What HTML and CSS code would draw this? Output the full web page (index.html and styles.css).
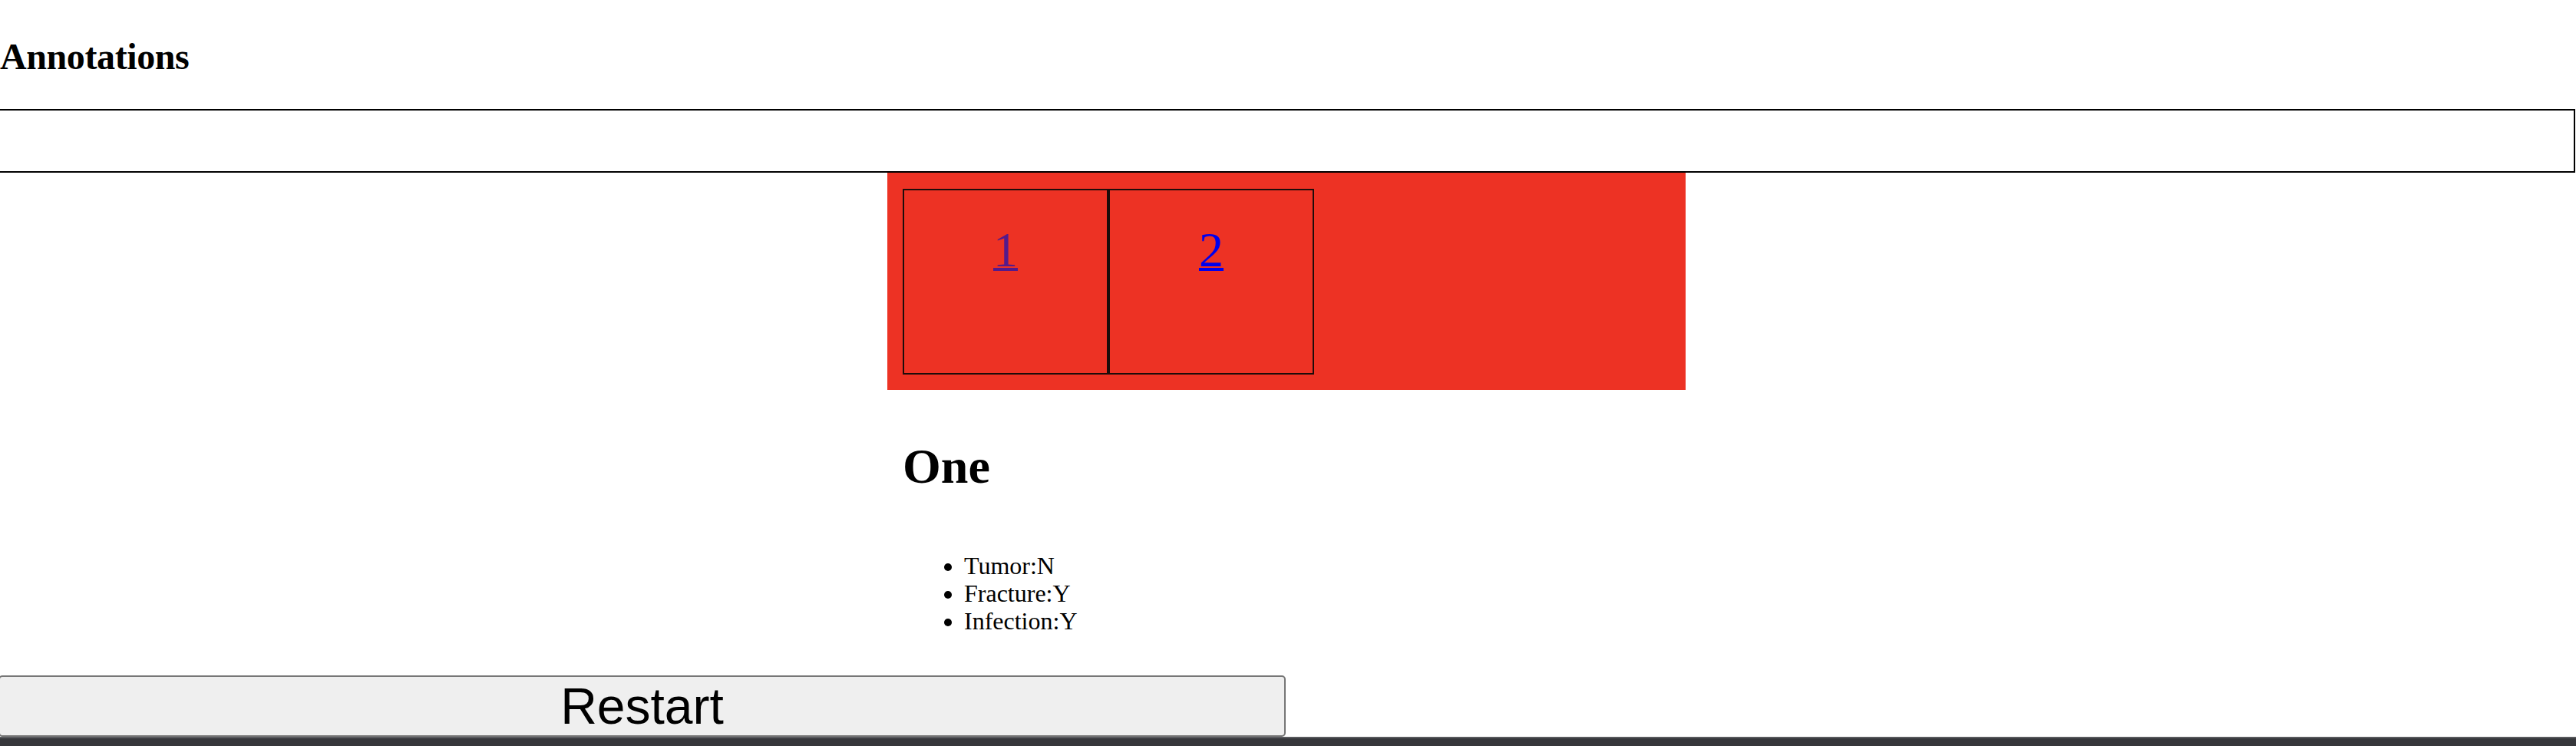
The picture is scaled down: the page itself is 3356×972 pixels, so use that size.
FILE: index.html
```html
<!DOCTYPE html>
<html lang="en">
<head>
<meta charset="utf-8">
<title>Annotations</title>
<link rel="stylesheet" href="styles.css">
</head>
<body>
  <h2 class="title">Annotations</h2>
  <input class="search" type="text">
  <div class="panel">
    <div class="tiles">
      <div class="tile"><a class="tile-link visited" href="#one">1</a></div>
      <div class="tile"><a class="tile-link" href="#two">2</a></div>
    </div>
  </div>
  <div class="detail">
    <h1 class="detail-title">One</h1>
    <ul class="findings">
      <li>Tumor:N</li>
      <li>Fracture:Y</li>
      <li>Infection:Y</li>
    </ul>
  </div>
  <button class="restart" type="button">Restart</button>
  <div class="scrollbar"></div>
</body>
</html>
```

FILE: styles.css
```css
html, body {
  margin: 0;
  padding: 0;
  background: #ffffff;
  overflow: hidden;
}

body {
  font-family: "Liberation Serif", "Times New Roman", serif;
  color: #000;
  height: 972px;
}

.title {
  margin: 46px 0 40px 0;
  font-size: 48px;
  line-height: 56px;
  font-weight: bold;
  letter-spacing: -0.4px;
}

.search {
  display: block;
  box-sizing: border-box;
  margin: 0 0 0 -2px;
  width: calc(100% + 1px);
  height: 83px;
  border: 2px solid #000;
  border-radius: 0;
  padding: 0;
  background: #fff;
  outline: none;
}

.panel {
  box-sizing: border-box;
  width: 1040px;
  margin-left: calc(50% - 522px);
  padding: 21px 20px 20px 20px;
  background: #ed3224;
}

.tiles {
  display: flex;
}

.tile {
  box-sizing: border-box;
  width: 268px;
  height: 242px;
  border: 2px solid #1c0c0a;
  padding-top: 41px;
  text-align: center;
  font-size: 64px;
  line-height: 74px;
}

.tile-link {
  color: #0000ee;
  text-decoration: underline;
  text-decoration-thickness: 4px;
  text-underline-offset: 2px;
}

.tile-link.visited {
  color: #551a8b;
}

.detail {
  box-sizing: border-box;
  width: 1040px;
  margin-left: calc(50% - 522px);
  padding: 0 20px;
}

.detail-title {
  margin: 63px 0 0 0;
  font-size: 64px;
  line-height: 74px;
  font-weight: bold;
}

.findings {
  margin: 74px 0 0 0;
  padding-left: 80px;
  font-size: 32px;
  line-height: 36px;
}

.restart {
  display: block;
  box-sizing: border-box;
  margin: 53px 0 0 -2px;
  width: 1677px;
  height: 80px;
  padding: 0;
  border: 2px solid #767676;
  border-radius: 5px;
  background: #efefef;
  color: #000;
  font-family: "Liberation Sans", Arial, sans-serif;
  font-size: 66px;
  line-height: 76px;
  text-align: center;
}

.scrollbar {
  position: fixed;
  left: 0;
  right: 0;
  bottom: 0;
  height: 12px;
  box-sizing: border-box;
  border-top: 2px solid #58595d;
  background: #36373b;
}
```
